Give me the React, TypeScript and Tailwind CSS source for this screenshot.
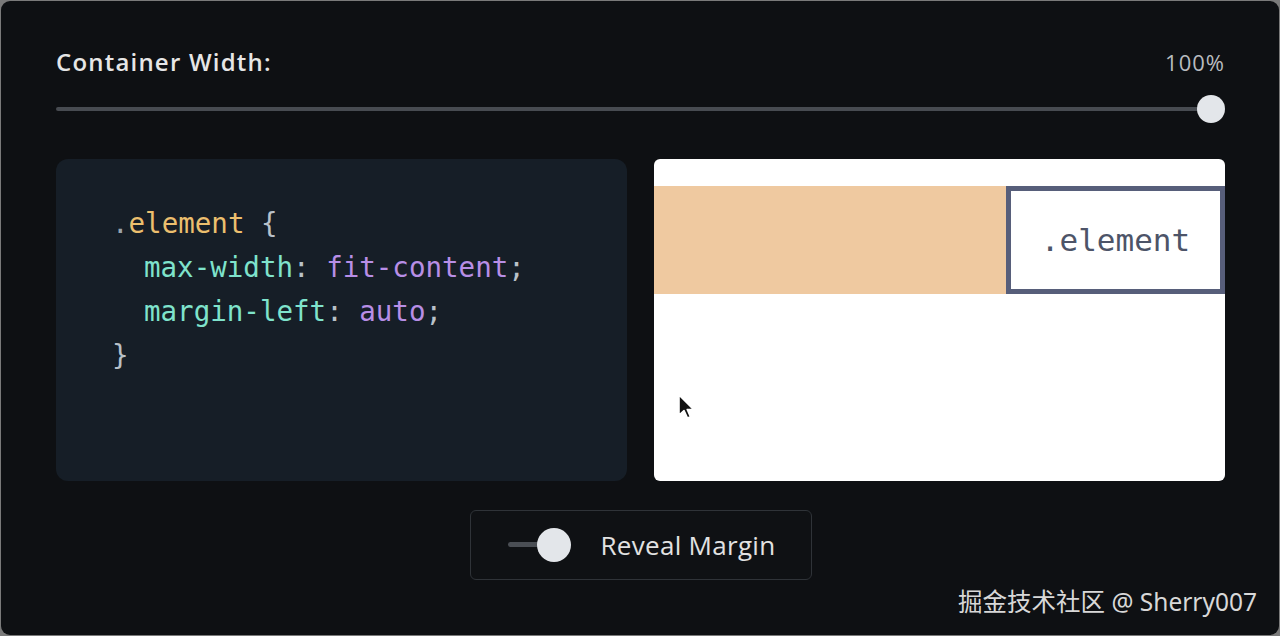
import React from 'react';

const mono = "font-['DejaVu_Sans_Mono','Liberation_Mono',monospace]";

function CodeBlock() {
  return (
    <div className={`rounded-xl bg-[#161e27] pl-[56px] pt-[42px] text-[27.5px] leading-[44px] ${mono} text-[#b9c1c9]`}>
      <div>
        <span className="text-[#9aa3ad]">.</span>
        <span className="text-[#ecbf6e]">element</span> {'{'}
      </div>
      <div className="pl-[32px]">
        <span className="text-[#7fe3cc]">max-width</span>: <span className="text-[#b88ee6]">fit-content</span>;
      </div>
      <div className="pl-[32px]">
        <span className="text-[#7fe3cc]">margin-left</span>: <span className="text-[#b88ee6]">auto</span>;
      </div>
      <div>{'}'}</div>
    </div>
  );
}

function Preview() {
  return (
    <div className="relative rounded-md bg-white pt-[27px]">
      <div className="flex h-[108px]">
        <div className="flex-1 bg-[#efc9a0]" />
        <div className={`flex w-[219px] items-center justify-center border-[5px] border-[#575e7a] bg-white text-[31px] text-[#4d5468] ${mono}`}>
          .element
        </div>
      </div>
      {/* mouse cursor */}
      <svg className="absolute" style={{ left: 23, top: 234 }} width="18" height="28" viewBox="0 0 18 28">
        <path d="M2 2 L2 22 L7 17.5 L10.5 25 L13.5 23.8 L10.2 16.5 L16.5 16.5 Z" fill="#111" stroke="#fff" strokeWidth="1.6" strokeLinejoin="round" />
      </svg>
    </div>
  );
}

export default function App() {
  return (
    <div className="h-[636px] w-[1280px] bg-[#7a7a7a] p-px">
      <div className="relative h-full w-full overflow-hidden rounded-[9px] bg-[#0e1013] pl-[55px] pr-[54px] pt-[46px] font-['Open_Sans','Noto_Sans',sans-serif]">
        <div className="flex items-end justify-between">
          <div className="text-[24px] font-semibold leading-[30px] tracking-[1.2px] text-[#e6e6e6]">Container Width:</div>
          <div className="pb-[2px] text-[22px] leading-[26px] tracking-[1px] text-[#b8bbbf]">100%</div>
        </div>

        <div className="relative mt-[17px] h-[30px]">
          <div className="absolute left-0 right-[14px] top-[13px] h-[4px] rounded-full bg-[#474b51]" />
          <div className="absolute right-0 top-[1px] h-[28px] w-[28px] rounded-full bg-[#e3e6ea]" />
        </div>

        <div className="mt-[35px] grid h-[322px] grid-cols-2 gap-[27px]">
          <CodeBlock />
          <Preview />
        </div>

        <div className="mt-[29px] flex justify-center">
          <div className="flex h-[70px] w-[342px] items-center rounded-md border border-[#2f3338] bg-[#0f1114] pl-[37px]">
            <div className="relative h-[34px] w-[63px]">
              <div className="absolute left-0 top-[14px] h-[5px] w-[40px] rounded-full bg-[#4a4e54]" />
              <div className="absolute right-0 top-0 h-[34px] w-[34px] rounded-full bg-[#e3e6ea]" />
            </div>
            <span className="ml-[30px] text-[26px] tracking-[0.3px] text-[#e2e2e2]">Reveal Margin</span>
          </div>
        </div>

        <div className="absolute bottom-[18px] right-[22px] font-['Noto_Sans','Noto_Sans_CJK_SC',sans-serif] text-[24.5px] leading-[30px] text-[#d8d8d8]">
          <span className="font-['Noto_Sans_CJK_SC',sans-serif]">掘金技术社区</span> @ Sherry007
        </div>
      </div>
    </div>
  );
}
